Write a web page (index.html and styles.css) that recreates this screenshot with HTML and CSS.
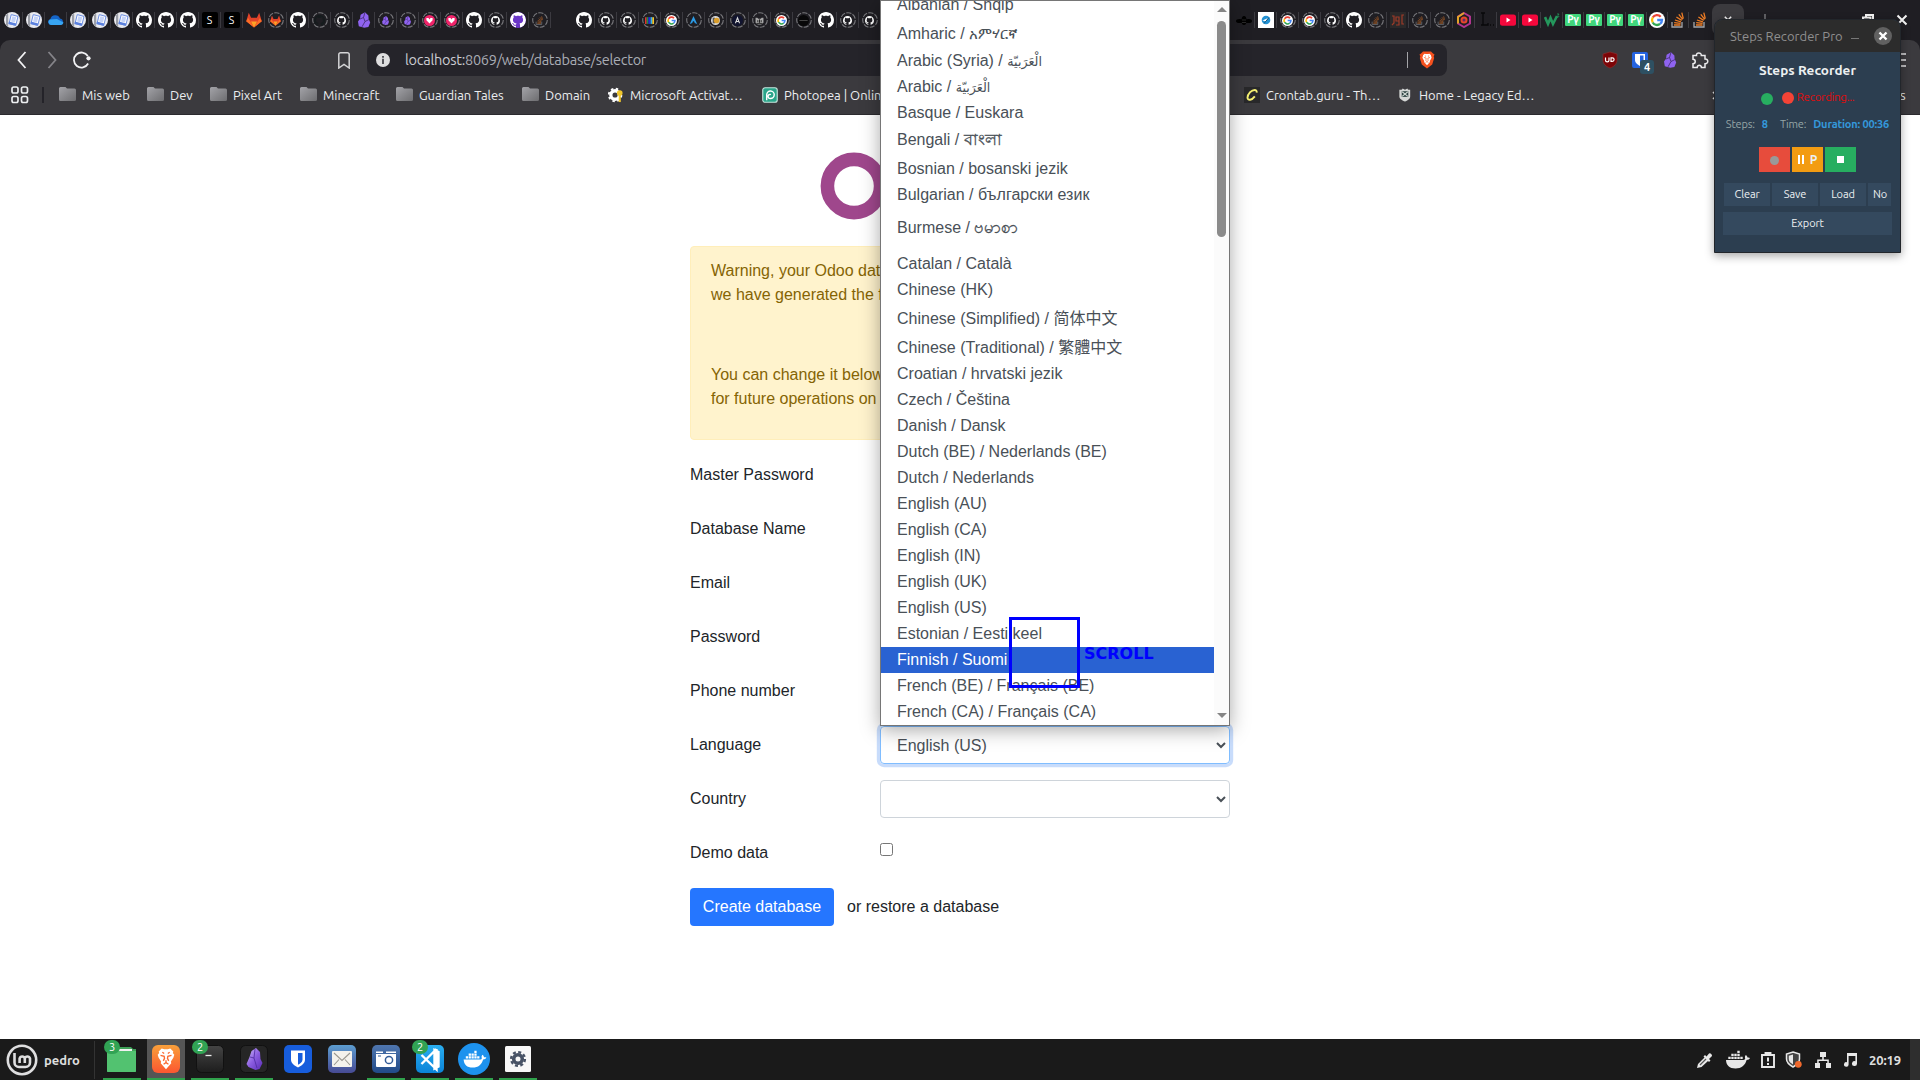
FILE: index.html
```html
<!DOCTYPE html>
<html lang="en">
<head>
<meta charset="utf-8">
<title>Odoo</title>
<link rel="stylesheet" href="styles.css">
</head>
<body>
<svg class="defs" aria-hidden="true">
  <defs>
    <linearGradient id="g-folder" x1="0" y1="0" x2="1" y2="1"><stop offset="0" stop-color="#a3a3a8"/><stop offset="1" stop-color="#6d6d70"/></linearGradient>
    <linearGradient id="g-brave" x1="0" y1="0" x2="0" y2="1"><stop offset="0" stop-color="#f9a03a"/><stop offset="1" stop-color="#fc5630"/></linearGradient>
    <linearGradient id="g-term" x1="0" y1="0" x2="0" y2="1"><stop offset="0" stop-color="#454545"/><stop offset="1" stop-color="#1d1d1d"/></linearGradient>
    <linearGradient id="g-mail" x1="0" y1="0" x2="0" y2="1"><stop offset="0" stop-color="#5c9dd0"/><stop offset="1" stop-color="#474a94"/></linearGradient>
    <linearGradient id="g-cam" x1="0" y1="0" x2="0" y2="1"><stop offset="0" stop-color="#4f76ae"/><stop offset="1" stop-color="#214a88"/></linearGradient>
    <linearGradient id="g-code" x1="0" y1="0" x2="0" y2="1"><stop offset="0" stop-color="#2aaef0"/><stop offset="1" stop-color="#0a84d8"/></linearGradient>
    <linearGradient id="g-obs" x1="0" y1="0" x2="1" y2="1"><stop offset="0" stop-color="#d0bcfb"/><stop offset=".5" stop-color="#8a5ce0"/><stop offset="1" stop-color="#5a2db5"/></linearGradient>
  </defs>
  <symbol id="ring" viewBox="0 0 16 16"><circle cx="8" cy="8" r="7.3" fill="none" stroke="#77777b" stroke-width="1.1" stroke-dasharray="5.2 1.3"/></symbol>
  <symbol id="gh" viewBox="0 0 16 16"><path d="M8 0C3.58 0 0 3.58 0 8c0 3.54 2.29 6.53 5.47 7.59.4.07.55-.17.55-.38 0-.19-.01-.82-.01-1.49-2.01.37-2.53-.49-2.69-.94-.09-.23-.48-.94-.82-1.13-.28-.15-.68-.52-.01-.53.63-.01 1.08.58 1.23.82.72 1.21 1.87.87 2.33.66.07-.52.28-.87.51-1.07-1.78-.2-3.64-.89-3.64-3.95 0-.87.31-1.59.82-2.15-.08-.2-.36-1.02.08-2.12 0 0 .67-.21 2.2.82.64-.18 1.32-.27 2-.27s1.36.09 2 .27c1.53-1.04 2.2-.82 2.2-.82.44 1.1.16 1.92.08 2.12.51.56.82 1.27.82 2.15 0 3.07-1.87 3.75-3.65 3.95.29.25.54.73.54 1.48 0 1.07-.01 1.93-.01 2.2 0 .21.15.46.55.38A8.01 8.01 0 0 0 16 8c0-4.42-3.58-8-8-8z"/></symbol>
  <symbol id="doc" viewBox="0 0 16 16"><circle cx="8" cy="8" r="8" fill="#e9eaef"/><path d="M2 3v10.500l2.200 1.200V1.500z" fill="#9c9fa8"/><g transform="rotate(14 9 8)"><rect x="6" y="3.200" width="7" height="9.300" rx=".6" fill="#fff" stroke="#6f90e2" stroke-width="1"/><path d="M7.500 4.500h4v5.500h-4z" fill="#c6d4f7"/><path d="M5.500 10.500h7.500V13H5.500z" fill="#5a80dd"/></g></symbol>
  <symbol id="cloud" viewBox="0 0 16 16"><path d="M3 13a3 3 0 0 1-.6-5.900A5 5 0 0 1 12 6.500a3.400 3.400 0 0 1 1 6.500z" fill="#1565c8"/><path d="M3 13a3 3 0 0 1-1-5.600L9 7l6.500 3.500A3 3 0 0 1 13 13z" fill="#38a5f2"/></symbol>
  <symbol id="gitlab" viewBox="0 0 16 16"><path d="M.2 9.200L2.800.700l2.300 5h5.800l2.300-5 2.600 8.500L8 15.500z" fill="#e2432a"/><path d="M.2 9.200l2-3.200L8 15.500zM15.800 9.200l-2-3.200L8 15.500z" fill="#fc6d26"/><path d="M5 9.500h6L8 15.500z" fill="#fca326"/></symbol>
  <symbol id="obs" viewBox="0 0 16 16"><path d="M9 .2l3.400 3.200.2 3.400 1.600 3.600-1.800 4.600-4.200.8-5.400-1.600L2 9.600l2-2.800.6-4z" fill="#8f63f0"/><path d="M9 .2L7.500 5.500 9 9.500 6 14.800M7.500 5.500L4 7M9 9.500l4-2" fill="none" stroke="#3d2b66" stroke-width=".8"/></symbol>
  <symbol id="vh" viewBox="0 0 16 16"><circle cx="8" cy="8" r="8" fill="#f0246a"/><path d="M8 12.500L3.500 7.500V4.500h3L8 6.500l1.500-2h3v3z" fill="#fff"/></symbol>
  <symbol id="so" viewBox="0 0 16 16"><path d="M2 10v5h10v-5" fill="none" stroke="#a5a7aa" stroke-width="1.300"/><path d="M4 13h6.500M4.200 10.600l6.400.7M4.900 8l6 1.800M6.400 5l5.300 3.400M8.800 2.300l3.900 5M11.800.600l1.500 6" stroke="#ef7d24" stroke-width="1.300"/></symbol>
  <symbol id="goo" viewBox="0 0 16 16"><circle cx="8" cy="8" r="8" fill="#fff"/><g fill="none" stroke-width="2.300"><path d="M11.700 4.700A5 5 0 0 0 3.700 5.500" stroke="#ea4335"/><path d="M3.700 5.500a5 5 0 0 0 0 5" stroke="#fbbc05"/><path d="M3.700 10.500a5 5 0 0 0 7.400 1.400" stroke="#34a853"/><path d="M11.100 11.900A5 5 0 0 0 13 8H8.200" stroke="#4285f4"/></g></symbol>
  <symbol id="rgb" viewBox="0 0 16 16"><path d="M0 2h3v12H0z" fill="#e4302b"/><path d="M3 2h3v12H3z" fill="#1f8b4a"/><path d="M6 2h4v12H6z" fill="#222bd6"/><path d="M10 2h3v12h-3z" fill="#3bb7e2"/><path d="M13 2h3v12h-3z" fill="#f3c62c"/></symbol>
  <symbol id="arch" viewBox="0 0 16 16"><path d="M8 0c2 4.500 4.500 10 7 15-2-1.500-3.500-2-5-2.500 0-4-4-4-4 0-1.500.5-3 1-5 2.500C3.500 10 6 4.500 8 0z" fill="#2b9be6"/></symbol>
  <symbol id="coin" viewBox="0 0 16 16"><circle cx="8" cy="8" r="8" fill="#d9d9d9"/><path d="M3 3h4v10H3z" fill="#555"/><circle cx="10" cy="8" r="5" fill="#d99d2b"/></symbol>
  <symbol id="dark" viewBox="0 0 16 16"><circle cx="8" cy="8" r="8" fill="#080809"/><path d="M2 8h12" stroke="#444" stroke-width="1.500"/></symbol>
  <symbol id="caret-a" viewBox="0 0 16 16"><circle cx="8" cy="8" r="8" fill="#11142e"/><path d="M5 12l3-8 3 8M6 9.500h4" fill="none" stroke="#ddd" stroke-width="1.500"/></symbol>
  <symbol id="bot" viewBox="0 0 16 16"><path d="M1 3h3l2 2h4l2-2h3v9l-4 3H5l-4-3z" fill="#a8a8a8"/><path d="M5 7.500v3M11 7.500v3M8 6v6M3 13h10" stroke="#111" stroke-width="1.600"/></symbol>
  <symbol id="yt" viewBox="0 0 16 16"><rect y="2.500" width="16" height="11.200" rx="2.500" fill="#f5083c"/><path d="M6.500 5.600v5l4-2.500z" fill="#fff"/></symbol>
  <symbol id="w3" viewBox="0 0 16 16"><path d="M1 5l3 7 2.500-6L9 12l4-8" fill="none" stroke="#24975c" stroke-width="2.600"/><path d="M13 2h2l-1 1.500 1 1-2 1" fill="none" stroke="#24975c" stroke-width=".8"/></symbol>
  <symbol id="bee" viewBox="0 0 16 16"><ellipse cx="3.500" cy="9" rx="3.500" ry="2"/><ellipse cx="12.500" cy="9" rx="3.500" ry="2"/><ellipse cx="8" cy="8.500" rx="2.500" ry="4.500"/><path d="M6 8h4M6 10.500h4" stroke="#333" stroke-width=".8"/></symbol>
  <symbol id="bird" viewBox="0 0 16 16"><path d="M0 0h16v16H0z" fill="#fff"/><circle cx="8" cy="8" r="4.300" fill="#2492d4"/><path d="M4.500 8.500l5.500-2.500-2 3.500z" fill="#fff"/><path d="M6 11.500l5-6" stroke="#17567c"/></symbol>
  <symbol id="jgl" viewBox="0 0 16 16"><path d="M0 0h16v16H0z" fill="#2b292a"/><path d="M2 4h2v7l-2 2M9 5H6v4h3zv8H6M14 3h-2v9h2" fill="none" stroke="#9e3b28" stroke-width="1.200"/></symbol>
  <symbol id="hex" viewBox="0 0 16 16"><path d="M8 1l6 3.500v7L8 15l-6-3.500v-7z" fill="none" stroke="#b0358f" stroke-width="2"/><path d="M2 11.500V5l6-4" fill="none" stroke="#e3a429" stroke-width="2"/><circle cx="8" cy="8" r="3.500" fill="#e8472a"/><circle cx="8" cy="8" r="1.500" fill="#602b6b"/></symbol>
  <symbol id="ell" viewBox="0 0 16 16"><path d="M3 1h4M5 1v12M3 13h7v-2M12 13h1M15 13h1" fill="none" stroke="#08080a" stroke-width="1.300"/></symbol>
  <symbol id="lion" viewBox="0 0 16 18"><path d="M4 .5h8l2 2 1.500 1-.8 2 .5 1.500-2 6.500L8 17.500 2.800 13.500.8 7l.5-1.500-.8-2L2 2.500z"/></symbol>
  <symbol id="face" viewBox="0 0 16 18"><path d="M4.500.5L6.500 1h3l2-.5 2.500 2.300-.4 1.200 1.200 1.500L14 8l-2 3 .3 1.500L8 17.300 3.700 12.500 4 11 2 8l-.8-2.500L2.400 4 2 2.800z"/><path d="M3.500 6l3 .8.3 1.700-1 2M12.500 6l-3 .8-.3 1.700 1 2M6 13.300l2-1.300 2 1.300M8 10v2M5 3.500l1.500 1M11 3.500l-1.500 1" fill="none" stroke="#fb6a32" stroke-width="1.100"/></symbol>
  <symbol id="folder" viewBox="0 0 17 15"><path d="M0 1.500A1.500 1.500 0 0 1 1.500 0h5L8 1.500h7.500A1.500 1.500 0 0 1 17 3v9.500a1.500 1.500 0 0 1-1.500 1.500h-14A1.500 1.500 0 0 1 0 12.500z" fill="url(#g-folder)"/></symbol>
  <symbol id="whale" viewBox="0 0 24 19"><path d="M0 10h17.500c1-.1 1.600-.6 1.700-1.400-.6-1.500-.1-2.600.6-3.500 1 .7 1.600 1.600 1.700 2.500 1-.2 1.900 0 2.500.4-.5 1.300-1.700 2-3.400 2C19 15.500 15.500 18.500 9.500 18.500 3.500 18.500.3 15.500 0 10z"/><path d="M2.300 6.700h2.400v2.400H2.300zM5.300 6.700h2.400v2.400H5.300zM8.300 6.700h2.400v2.400H8.300zM11.300 6.700h2.400v2.400h-2.400zM14.300 6.700h2.400v2.400h-2.400zM5.300 3.700h2.400v2.400H5.300zM8.300 3.700h2.400v2.400H8.300zM11.300 3.700h2.400v2.400h-2.400zM11.300.700h2.400v2.400h-2.400z"/></symbol>
</svg>

<div class="desktop">
  <header class="browser">
    <div class="tabs">
      <div class="tab"><svg><use href="#doc"/></svg></div>
      <div class="tab"><svg><use href="#doc"/></svg></div>
      <div class="tab"><svg><use href="#cloud"/></svg></div>
      <div class="tab"><svg><use href="#doc"/></svg></div>
      <div class="tab"><svg><use href="#doc"/></svg></div>
      <div class="tab"><svg><use href="#doc"/></svg></div>
      <div class="tab"><svg><use href="#gh"/></svg></div>
      <div class="tab"><svg><use href="#gh"/></svg></div>
      <div class="tab"><svg><use href="#gh"/></svg></div>
      <div class="tab"><span class="letter">S</span></div>
      <div class="tab"><span class="letter">S</span></div>
      <div class="tab"><svg><use href="#gitlab"/></svg></div>
      <div class="tab idle big"><svg><use href="#ring"/></svg><svg><use href="#gitlab"/></svg></div>
      <div class="tab"><svg><use href="#gh"/></svg></div>
      <div class="tab idle dim"><svg><use href="#ring"/></svg><svg><use href="#gh"/></svg></div>
      <div class="tab idle"><svg><use href="#ring"/></svg><svg><use href="#gh"/></svg></div>
      <div class="tab"><svg><use href="#obs"/></svg></div>
      <div class="tab idle"><svg><use href="#ring"/></svg><svg><use href="#obs"/></svg></div>
      <div class="tab idle"><svg><use href="#ring"/></svg><svg><use href="#obs"/></svg></div>
      <div class="tab idle big"><svg><use href="#ring"/></svg><svg><use href="#vh"/></svg></div>
      <div class="tab idle big"><svg><use href="#ring"/></svg><svg><use href="#vh"/></svg></div>
      <div class="tab"><svg><use href="#gh"/></svg></div>
      <div class="tab idle"><svg><use href="#ring"/></svg><svg><use href="#gh"/></svg></div>
      <div class="tab purple"><svg><use href="#gh"/></svg></div>
      <div class="tab idle faded"><svg><use href="#ring"/></svg><svg><use href="#so"/></svg></div>
      <div class="tab blank"></div>
      <div class="tab"><svg><use href="#gh"/></svg></div>
      <div class="tab idle"><svg><use href="#ring"/></svg><svg><use href="#gh"/></svg></div>
      <div class="tab idle"><svg><use href="#ring"/></svg><svg><use href="#gh"/></svg></div>
      <div class="tab idle"><svg><use href="#ring"/></svg><svg><use href="#rgb"/></svg></div>
      <div class="tab idle big"><svg><use href="#ring"/></svg><svg><use href="#goo"/></svg></div>
      <div class="tab idle"><svg><use href="#ring"/></svg><svg><use href="#arch"/></svg></div>
      <div class="tab idle"><svg><use href="#ring"/></svg><svg><use href="#coin"/></svg></div>
      <div class="tab idle big"><svg><use href="#ring"/></svg><svg><use href="#caret-a"/></svg></div>
      <div class="tab idle"><svg><use href="#ring"/></svg><svg><use href="#bot"/></svg></div>
      <div class="tab idle big"><svg><use href="#ring"/></svg><svg><use href="#goo"/></svg></div>
      <div class="tab idle big"><svg><use href="#ring"/></svg><svg><use href="#dark"/></svg></div>
      <div class="tab"><svg><use href="#gh"/></svg></div>
      <div class="tab idle"><svg><use href="#ring"/></svg><svg><use href="#gh"/></svg></div>
      <div class="tab idle"><svg><use href="#ring"/></svg><svg><use href="#gh"/></svg></div>
      <div class="tab-gap"></div>
      <div class="tab"><svg class="ink"><use href="#bee"/></svg></div>
      <div class="tab"><svg><use href="#bird"/></svg></div>
      <div class="tab idle big"><svg><use href="#ring"/></svg><svg><use href="#goo"/></svg></div>
      <div class="tab idle big"><svg><use href="#ring"/></svg><svg><use href="#goo"/></svg></div>
      <div class="tab idle"><svg><use href="#ring"/></svg><svg><use href="#gh"/></svg></div>
      <div class="tab"><svg><use href="#gh"/></svg></div>
      <div class="tab idle faded"><svg><use href="#ring"/></svg><svg><use href="#so"/></svg></div>
      <div class="tab"><svg><use href="#jgl"/></svg></div>
      <div class="tab idle faded"><svg><use href="#ring"/></svg><svg><use href="#so"/></svg></div>
      <div class="tab idle faded"><svg><use href="#ring"/></svg><svg><use href="#so"/></svg></div>
      <div class="tab"><svg><use href="#hex"/></svg></div>
      <div class="tab"><svg><use href="#ell"/></svg></div>
      <div class="tab"><svg><use href="#yt"/></svg></div>
      <div class="tab"><svg><use href="#yt"/></svg></div>
      <div class="tab"><svg><use href="#w3"/></svg></div>
      <div class="tab tight"><span class="letter py">Pγ</span></div>
      <div class="tab tight"><span class="letter py">Pγ</span></div>
      <div class="tab tight"><span class="letter py">Pγ</span></div>
      <div class="tab tight"><span class="letter py">Pγ</span></div>
      <div class="tab tight"><svg><use href="#goo"/></svg></div>
      <div class="tab tight"><svg><use href="#so"/></svg></div>
      <div class="tab tight last"><svg><use href="#so"/></svg></div>
      <div class="tab-active"><svg viewBox="0 0 10 10"><path d="M1 1l8 8M9 1L1 9"/></svg></div>
      <svg class="tab-new" viewBox="0 0 12 12"><path d="M6 0v12M0 6h12"/></svg>
      <div class="win-ctl">
        <svg viewBox="0 0 12 12"><path d="M1 3.500h7.500V11H1zM4 3V1h7v7.500H9"/></svg>
        <svg viewBox="0 0 12 12"><path d="M1.500 1.500l9 9M10.500 1.500l-9 9"/></svg>
      </div>
    </div>

    <div class="chrome">
      <div class="toolbar">
        <svg class="nav" viewBox="0 0 90 32"><path d="M15.500 8L8.500 16l7 8" stroke="#f2f2f4"/><path d="M38.500 8l7 8-7 8" stroke="#858489"/><path d="M77.800 12a7.500 7.500 0 1 0 .3 7.500" stroke="#f2f2f4"/><circle cx="78.500" cy="14.300" r="2.100" fill="#f2f2f4" stroke="none"/></svg>
        <svg class="mark" viewBox="0 0 12 17"><path d="M.8 2.500A1.700 1.700 0 0 1 2.500.8h7a1.700 1.700 0 0 1 1.700 1.700V16L6 12.500.8 16z"/></svg>
        <div class="address">
          <svg class="info" viewBox="0 0 14 14"><circle cx="7" cy="7" r="7" fill="#dededf"/><path d="M6 3h2v1.700H6zM6 5.800h2V11H6z" fill="#55555a"/></svg>
          <div class="url"><b>localhost:</b>8069/web/database/selector</div>
          <i class="bar"></i>
          <svg class="brave" viewBox="0 0 16 18"><use href="#lion" fill="#f4511e"/><use href="#face" x="2.500" y="2" width="11" height="13" fill="#fff"/></svg>
        </div>
        <div class="exts">
          <svg viewBox="0 0 18 18"><path d="M9 1l7 2v6c0 4-3 6.500-7 8-4-1.500-7-4-7-8V3z" fill="#7d0508" stroke="#93312f" stroke-width=".6"/><path d="M4.500 6.500v2.700a1.500 1.500 0 0 0 3.500 0V6.500M10 6.800h1.300a1.800 1.800 0 0 1 0 3.600H10z" fill="none" stroke="#fff" stroke-width="1.200"/></svg>
          <div class="ext-count"><svg viewBox="0 0 18 18"><rect x="1" y="1" width="16" height="16" rx="2" fill="#2563e0"/><path d="M4 3h10v6c0 3-2.500 4.500-5 6-2.500-1.500-5-3-5-6z" fill="#fff"/><path d="M9 4.500h3.500V9c0 2-1.500 3.200-3.500 4.300z" fill="#2563e0"/></svg><em>4</em></div>
          <svg viewBox="0 0 18 18"><use href="#obs" x="1" y="1" width="16" height="16"/></svg>
          <svg viewBox="0 0 18 18"><path d="M2 4.500h3.500C5 1 10.500 1 10.300 4.500H14V8c3.700-.4 3.700 5 0 4.700V16.500h-3.600c.1-2.900-4.300-2.900-4.200 0H2v-3.700c3-.2 3-4.300 0-4.500z" fill="none" stroke="#ececee" stroke-width="1.500"/></svg>
        </div>
        <svg class="menu" viewBox="0 0 16 14"><path d="M0 1h16M0 7h16M0 13h16"/></svg>
      </div>
      <div class="bookmarks">
        <svg class="apps" viewBox="0 0 18 18"><g><rect x="1" y="1" width="6" height="6" rx="1.700"/><rect x="10.500" y="1" width="6" height="6" rx="1.700"/><rect x="1" y="10.500" width="6" height="6" rx="1.700"/><rect x="10.500" y="10.500" width="6" height="6" rx="1.700"/></g></svg>
        <i class="divider"></i>
        <div class="bm w1"><svg><use href="#folder"/></svg><span>Mis web</span></div>
        <div class="bm w2"><svg><use href="#folder"/></svg><span>Dev</span></div>
        <div class="bm w3"><svg><use href="#folder"/></svg><span>Pixel Art</span></div>
        <div class="bm w4"><svg><use href="#folder"/></svg><span>Minecraft</span></div>
        <div class="bm w5"><svg><use href="#folder"/></svg><span>Guardian Tales</span></div>
        <div class="bm w6"><svg><use href="#folder"/></svg><span>Domain</span></div>
        <div class="bm w7"><svg viewBox="0 0 17 17"><circle cx="7.500" cy="8.500" r="4.500" fill="none" stroke="#fff" stroke-width="3.500"/><circle cx="7.500" cy="8.500" r="6.700" fill="none" stroke="#fff" stroke-width="2" stroke-dasharray="2.600 2.660"/><circle cx="12.500" cy="6.500" r="3" fill="#f0c62c"/><path d="M12.500 8v8" stroke="#f0c62c" stroke-width="2.200"/></svg><span>Microsoft Activat…</span></div>
        <div class="bm w8"><svg viewBox="0 0 17 17"><rect x=".8" y=".8" width="15.400" height="15.400" rx="2.500" fill="#2aa58a" stroke="#c5e5dd" stroke-width="1.200"/><path d="M5 14V8a4 4 0 1 1 4 4.200 2.200 2.200 0 1 1 .5-4.200" fill="none" stroke="#fff" stroke-width="1.500"/></svg><span>Photopea | Onlin</span></div>
        <div class="bm w9"><svg viewBox="0 0 17 17"><rect width="17" height="17" fill="#28282a"/><path d="M13.500 6c.5-4-4-3.500-7-.5-4 4.500-3.500 8.500 0 8 2-.3 3.500-1.500 5-3.500" fill="none" stroke="#f4ef72" stroke-width="2"/></svg><span>Crontab.guru - Th…</span></div>
        <div class="bm w10"><svg viewBox="0 0 17 17"><path d="M2.500 3c2 0 3-.3 3.500-1.500L8.500 3 11 1.500C11.500 2.700 12.500 3 14 3v7c0 3-3 4-5.500 5.500C6 14 2.500 13 2.500 10z" fill="#d5d7d6"/><path d="M5 4.500h7v6H5z" fill="#2d4242"/><path d="M5.500 5l6 5M11.500 5l-6 5" stroke="#cfd8d4" stroke-width="1.200"/></svg><span>Home - Legacy Ed…</span></div>
        <svg class="more" viewBox="0 0 6 9"><path d="M1 1l3.500 3.500L1 8"/></svg>
        <div class="bm"><span>s</span></div>
      </div>
    </div>
  </header>

  <main class="page">
    <div class="container">
      <div class="logo"><svg viewBox="0 0 212 68"><circle cx="34" cy="34" r="26.600" fill="none" stroke="#9f478c" stroke-width="13.600"/></svg></div>
      <div class="alert">
        <p>Warning, your Odoo dat<br>we have generated the f</p>
        <p>You can change it below<br>for future operations on</p>
      </div>
      <div class="row"><label>Master Password</label></div>
      <div class="row"><label>Database Name</label></div>
      <div class="row"><label>Email</label></div>
      <div class="row"><label>Password</label></div>
      <div class="row"><label>Phone number</label></div>
      <div class="row"><label>Language</label><div class="select focus"><span>English (US)</span><svg viewBox="0 0 10 7"><path d="M1 1l4 4 4-4"/></svg></div></div>
      <div class="row"><label>Country</label><div class="select"><span></span><svg viewBox="0 0 10 7"><path d="M1 1l4 4 4-4"/></svg></div></div>
      <div class="row"><label>Demo data</label><div class="check"></div></div>
      <div class="actions"><div class="btn">Create database</div><span>or restore a database</span></div>
    </div>
  </main>

  <footer class="panel">
    <svg class="mint" viewBox="0 0 32 32"><circle cx="16" cy="16" r="14.200" fill="none" stroke="#dededf" stroke-width="2.600"/><path d="M8.500 9v9.500a4.500 4.500 0 0 0 4.500 4.500h6.500a4.500 4.500 0 0 0 4.500-4.500v-4a2.700 2.700 0 0 0-5.200 0V19v-4.500a2.700 2.700 0 0 0-5.200 0V19" fill="none" stroke="#dededf" stroke-width="2.600"/></svg>
    <span class="user">pedro</span>
    <i class="psep"></i>
    <div class="task on"><svg viewBox="0 0 38 36"><path d="M4 6h24l2 2h3v22a1 1 0 0 1-1 1H5a1 1 0 0 1-1-1z" fill="#3e9f57"/><path d="M12 8h17v2H12z" fill="#f1f1f1"/><path d="M4 10h29v20a1 1 0 0 1-1 1H5a1 1 0 0 1-1-1z" fill="#52c270"/></svg><em>3</em></div>
    <div class="task on current"><svg viewBox="0 0 38 36"><rect x="5" y="4" width="28" height="28" rx="6" fill="url(#g-brave)"/><use href="#face" x="8" y="7" width="22" height="22" fill="#fff"/></svg></div>
    <div class="task on"><svg viewBox="0 0 38 36"><rect x="5.500" y="4.500" width="27" height="27" rx="5" fill="url(#g-term)" stroke="#111"/><path d="M14.500 14.500h6" stroke="#eee" stroke-width="1.300"/></svg><em>2</em></div>
    <div class="task on"><svg viewBox="0 0 38 36"><rect x="5.500" y="4.500" width="27" height="27" rx="5" fill="#262626" stroke="#111"/><path d="M21 7l4 4 .5 7 2 4-3 6-4 1-7-3-2-3 3-7 2-6z" fill="url(#g-obs)"/><path d="M20 8l-1 9-4-1M19 17l3 10" fill="none" stroke="#4c2aa0" stroke-width=".8"/></svg></div>
    <div class="task"><svg viewBox="0 0 38 36"><rect x="5" y="4" width="28" height="28" rx="5" fill="#175ddc"/><path d="M12 9.500h14v9c0 4-3.500 6.300-7 8-3.500-1.700-7-4-7-8z" fill="#fff"/><path d="M19 12h4.500v6.500c0 2.500-2 4-4.500 5.300z" fill="#175ddc"/></svg></div>
    <div class="task"><svg viewBox="0 0 38 36"><rect x="5" y="4" width="28" height="28" rx="5" fill="url(#g-mail)"/><rect x="9" y="10" width="20" height="16" rx="1" fill="#f4f2ec"/><path d="M11 12l8 7.500 8-7.500M11 24l5-5.500M27 24l-5-5.500" fill="none" stroke="#9a9890" stroke-width="1.100"/></svg></div>
    <div class="task on"><svg viewBox="0 0 38 36"><rect x="5" y="4" width="28" height="28" rx="5" fill="url(#g-cam)"/><path d="M9 13h20v12a1 1 0 0 1-1 1H10a1 1 0 0 1-1-1zM9 10.500h7V12H9zM19 10.500h10V12H19z" fill="#fff"/><circle cx="22" cy="19" r="3.600" fill="none" stroke="#335c98" stroke-width="1.500"/><path d="M11 15h3" stroke="#335c98"/></svg></div>
    <div class="task on"><svg viewBox="0 0 38 36"><rect x="5" y="4" width="28" height="28" rx="5" fill="url(#g-code)"/><path d="M25.500 8v20.500L10.500 14M25.500 8L10.500 23M23.500 9v18.500l4-2V11z" fill="none" stroke="#fff" stroke-width="2.400"/></svg><em>2</em></div>
    <div class="task on"><svg viewBox="0 0 38 36"><circle cx="19" cy="18" r="16" fill="#1d92ee"/><use href="#whale" x="8" y="9" width="24" height="18" fill="#fff"/></svg></div>
    <div class="task on"><svg viewBox="0 0 38 36"><rect x="6" y="5" width="26" height="26" rx="1.500" fill="#f8f8f8"/><circle cx="19" cy="18" r="4.300" fill="none" stroke="#475265" stroke-width="3.600"/><circle cx="19" cy="18" r="6.900" fill="none" stroke="#475265" stroke-width="2.400" stroke-dasharray="3 2.420"/></svg></div>
    <div class="tray">
      <svg class="t1" viewBox="0 0 16 16"><path d="M0 16l1-4 6.500-6.500-1-1L8 3l1.500 1.500L12 1.500A2.300 2.300 0 0 1 15 4l-3 3 1.500 1.500L12 10l-1-1-6.500 6z"/><path d="M3 13l6-6" stroke="#555" stroke-width="1.200"/></svg>
      <svg class="t2" viewBox="0 0 24 19"><use href="#whale"/></svg>
      <svg class="t3" viewBox="0 0 14 16"><path d="M1 3h12v12H1zM4.500 3V1h5v2" fill="none" stroke="#e8e8e8" stroke-width="1.900"/><path d="M6 5.500h2v4H6zM6 11h2v2H6z"/></svg>
      <svg class="t4" viewBox="0 0 17 17"><path d="M8 1l6.500 2v5c0 4-3 6-6.500 8C4.500 14 1.500 12 1.500 8V3z" fill="#444" stroke="#e8e8e8" stroke-width="1.500"/><path d="M8 3.500v10C5.500 12 3.800 10.500 3.800 8V4.700z"/><circle cx="13.300" cy="13.300" r="3.400" fill="#f0692d"/></svg>
      <svg class="t5" viewBox="0 0 16 16"><path d="M5 0h6v5H5zM0 11h5v5H0zM11 11h5v5h-5zM7.200 5h1.600v2.500h5V11h-1.500V9H3.700v2H2.200V7.500h5z"/></svg>
      <svg class="t6" viewBox="0 0 13 15"><path d="M3 1h10v10.500a2.500 2.500 0 1 1-1.600-2.300V4H4.600v8.500a2.300 2.300 0 1 1-1.600-2.200z"/></svg>
      <span class="clock">20:19</span>
    </div>
    <i class="peek"></i>
  </footer>

  <div class="dropdown">
    <ul class="options">
      <li>Albanian / Shqip</li>
      <li class="amh">Amharic / <span lang="am">አምሃርኛ</span></li>
      <li>Arabic (Syria) / <span lang="ar">الْعَرَبيّة</span></li>
      <li>Arabic / <span lang="ar">الْعَرَبيّة</span></li>
      <li>Basque / Euskara</li>
      <li class="ben">Bengali / <span lang="bn">বাংলা</span></li>
      <li>Bosnian / bosanski jezik</li>
      <li>Bulgarian / български език</li>
      <li class="bur">Burmese / <span lang="my">ဗမာစာ</span></li>
      <li>Catalan / Català</li>
      <li>Chinese (HK)</li>
      <li class="cjk">Chinese (Simplified) / <span lang="zh-CN">简体中文</span></li>
      <li class="cjk">Chinese (Traditional) / <span lang="zh-TW">繁體中文</span></li>
      <li>Croatian / hrvatski jezik</li>
      <li>Czech / Čeština</li>
      <li>Danish / Dansk</li>
      <li>Dutch (BE) / Nederlands (BE)</li>
      <li>Dutch / Nederlands</li>
      <li>English (AU)</li>
      <li>English (CA)</li>
      <li>English (IN)</li>
      <li>English (UK)</li>
      <li>English (US)</li>
      <li>Estonian / Eesti keel</li>
      <li class="hover">Finnish / Suomi</li>
      <li>French (BE) / Français (BE)</li>
      <li>French (CA) / Français (CA)</li>
    </ul>
    <div class="scrollbar"><i class="up"></i><i class="thumb"></i><i class="down"></i></div>
  </div>

  <div class="marker"></div>
  <div class="marker-label">SCROLL</div>

  <section class="recorder">
    <div class="titlebar"><span>Steps Recorder Pro</span><i></i><svg viewBox="0 0 18 18"><circle cx="9" cy="9" r="9" fill="#616161"/><path d="M5.500 5.500l7 7M12.500 5.500l-7 7" stroke="#fff" stroke-width="2.400"/></svg></div>
    <h1>Steps Recorder</h1>
    <div class="status"><i class="dot green"></i><i class="dot red"></i><span>Recording...</span></div>
    <div class="stats"><span>Steps:</span><b>8</b><span>Time:</span><b>Duration: 00:36</b></div>
    <div class="controls">
      <div class="rec"><i></i></div>
      <div class="pause"><i></i><i></i><span>P</span></div>
      <div class="stop"><i></i></div>
    </div>
    <div class="tools"><div>Clear</div><div>Save</div><div>Load</div><div class="cut">No</div></div>
    <div class="export">Export</div>
  </section>
</div>
</body>
</html>
```
FILE: styles.css
```css
* { box-sizing: border-box; }
body { margin: 0; background: #fff; font-family: "Liberation Sans", Arial, sans-serif; font-size: 16px; }
i, em, b { font-style: normal; }
.defs { position: absolute; width: 0; height: 0; }
.desktop { position: relative; width: 1920px; height: 1080px; overflow: hidden; display: flex; flex-direction: column; }

/* browser frame */
.browser { height: 115px; background: #1f1e23; font-family: Ubuntu, "Noto Sans", sans-serif; flex: none; }
.tabs { height: 40px; display: flex; align-items: center; padding-left: 1px; }
.tab { width: 22px; height: 16px; flex: none; display: grid; place-items: center; border-right: 1px solid #3b3a40; fill: #fff; }
.tab svg { width: 16px; height: 16px; grid-area: 1 / 1; }
.tab.idle svg + svg { width: 9px; height: 9px; }
.tab.idle.big svg + svg { width: 11px; height: 11px; }
.tab.dim { fill: #151b1d; }
.tab.dim svg + svg { width: 11px; height: 11px; }
.tab.faded svg + svg { opacity: .65; }
.tab .ink { fill: #000; }
.tab.purple svg { background: #6a35c8; border-radius: 50%; }
.tab.blank { border-right-color: transparent; }
.tab.tight { width: 21px; }
.tab.last { border: 0; }
.letter { width: 16px; height: 16px; border-radius: 2px; background: #000; color: #fff; font-size: 10.500px; line-height: 16px; text-align: center; }
.letter.py { height: 12px; line-height: 11px; font-size: 10px; font-weight: 600; border-radius: 1px; background: #40d67c; }
.tab-gap { width: 352px; flex: none; }
.tab-active { width: 32px; height: 32px; margin-left: 2px; background: #3b3a3e; border-radius: 8px; display: grid; place-items: center; }
.tab-active svg { width: 8px; height: 8px; fill: none; stroke: #f2f2f4; stroke-width: 1.900; }
.tab-new { width: 12px; height: 12px; margin-left: 15px; stroke: #77777b; stroke-width: 1.500; }
.win-ctl { margin-left: auto; padding-right: 12px; display: flex; gap: 22px; fill: none; stroke: #f4f4f4; stroke-width: 2; }
.win-ctl svg { width: 12px; height: 12px; }
.chrome { height: 75px; background: #3b3a3e; border-radius: 10px 10px 0 0; border-bottom: 1px solid #2b2a2e; }
.toolbar { height: 40px; display: flex; align-items: center; padding-left: 10px; }
.nav { width: 90px; height: 32px; fill: none; stroke-width: 1.800; }
.mark { width: 12px; height: 17px; margin-left: 238px; fill: none; stroke: #d4d4d6; stroke-width: 1.500; }
.address { width: 1080px; height: 32px; margin-left: 17px; border-radius: 8px; background: #25242a; display: flex; align-items: center; padding: 0 12px 0 9px; color: #aaadb5; }
.info { width: 14px; height: 14px; margin-right: 15px; }
.url { font-size: 14.500px; white-space: nowrap; letter-spacing: -.26px; margin-top: -2px; }
.url b { font-weight: 400; color: #cbccd2; }
.bar { width: 1px; height: 16px; background: #a4a4a8; margin-left: auto; margin-right: 11px; }
.brave { width: 16px; height: 18px; }
.exts { display: flex; gap: 12px; margin-left: 154px; }
.exts svg { width: 18px; height: 18px; display: block; }
.ext-count { position: relative; }
.ext-count em { position: absolute; left: 9px; top: 9px; width: 14px; height: 14px; border-radius: 3px; background: #2e5062; color: #fff; font-size: 11px; line-height: 14px; font-weight: 600; text-align: center; }
.menu { width: 16px; height: 14px; margin-left: 181px; stroke: #e4e4e6; stroke-width: 1.600; }
.bookmarks { height: 30px; display: flex; align-items: center; padding-left: 11px; color: #eceef0; font-size: 13px; white-space: nowrap; overflow: hidden; }
.apps { width: 18px; height: 18px; fill: none; stroke: #eceef0; stroke-width: 1.700; flex: none; }
.divider { width: 2px; height: 16px; background: #242329; margin: 0 15px 0 13px; flex: none; }
.bm { display: flex; align-items: center; gap: 6px; flex: none; letter-spacing: -.03px; }
.bm svg { width: 17px; height: 15px; flex: none; margin-top: -1px; }
.w1 { width: 88px; } .w2 { width: 63px; } .w3 { width: 90px; } .w4 { width: 96px; }
.w5 { width: 126px; } .w6 { width: 86px; } .w7 { width: 154px; } .w8 { width: 482px; }
.w9 { width: 153px; } .w10 { width: 315px; }
.w7 svg, .w8 svg, .w9 svg, .w10 svg { width: 16px; height: 16px; margin-top: 0; }
.more { width: 6px; height: 9px; fill: none; stroke: #eceef0; stroke-width: 1.500; flex: none; margin-right: 182px; }

/* page */
.page { flex: 1; background: #fff; padding-top: 37px; color: #212529; line-height: 24px; }
.container { width: 540px; margin: 0 auto; }
.logo { height: 94px; padding-left: 130px; }
.logo svg { width: 212px; height: 68px; display: block; }
.alert { height: 194px; border: 1px solid #ffeeba; border-radius: 4px; background: #fff3cd; color: #856404; padding: 12px 20px; margin-bottom: 16px; white-space: nowrap; overflow: hidden; }
.alert p { margin: 0 0 56px; }
.row { height: 38px; margin-bottom: 16px; display: flex; align-items: center; }
.row label { width: 190px; }
.select { width: 350px; height: 38px; border: 1px solid #ced4da; border-radius: 4px; padding: 2px 3px 0 16px; color: #495057; display: flex; align-items: center; justify-content: space-between; }
.select.focus { border-color: #80bdff; box-shadow: 0 0 0 3.200px #c8dcfb; }
.select svg { width: 10px; height: 7px; margin-top: -2px; fill: none; stroke: #495057; stroke-width: 2; }
.check { width: 13px; height: 13px; border: 1px solid #767676; border-radius: 2.500px; margin-top: -7px; }
.actions { display: flex; align-items: center; gap: 13px; }
.btn { width: 144px; height: 38px; line-height: 38px; border-radius: 4px; background: #2576ff; color: #fff; text-align: center; }

/* select popup */
.dropdown { position: absolute; left: 880px; top: 0; width: 350px; height: 726px; border: 1px solid #767676; background: #fff; display: flex; overflow: hidden; box-shadow: 0 4px 18px rgba(0, 0, 0, .34); }
.options { flex: 1; margin: -9px 0 0; padding: 0; list-style: none; color: #495057; }
.options li { height: 26px; line-height: 25px; padding-left: 16px; white-space: nowrap; overflow: hidden; font-family: "Liberation Sans", "Noto Sans", "Noto Sans CJK SC", sans-serif; }
.options .amh { height: 30px; padding-top: 3px; }
.options .ben { height: 30px; padding-top: 1px; }
.options .bur { height: 43px; padding-top: 7px; }
.options .cjk { height: 29px; padding-top: 2px; }
.options .hover { background: #2962d2; color: #fff; }
[lang="am"] { font-size: 14.500px; }
[lang="bn"], [lang="my"] { -webkit-text-stroke: .3px #495057; }
[lang="my"] { font-size: 16.500px; }
[lang="ar"] { font-size: 12.700px; font-family: "DejaVu Sans", sans-serif; }
[lang="zh-CN"] { font-family: "Noto Sans CJK SC", sans-serif; }
[lang="zh-TW"] { font-family: "Noto Sans CJK TC", sans-serif; }
.scrollbar { width: 15px; background: #fbfbfb; display: flex; flex-direction: column; align-items: center; padding: 6px 0 7px; }
.up { border: 5px solid transparent; border-top: 0; border-bottom: 5px solid #858585; }
.thumb { width: 9px; height: 216px; border-radius: 5px; background: #8b8b8b; margin-top: 9px; }
.down { border: 5px solid transparent; border-bottom: 0; border-top: 5px solid #858585; margin-top: auto; }

/* click annotation */
.marker { position: absolute; left: 1009px; top: 617px; width: 71px; height: 71px; border: 3px solid #00f; }
.marker-label { position: absolute; left: 1084px; top: 644px; font: bold 16px/20px "DejaVu Sans", sans-serif; color: #00f; }

/* recorder window */
.recorder { position: absolute; left: 1714px; top: 19px; width: 187px; height: 234px; background: #2c3e50; border: 1px solid #22262b; border-radius: 8px 8px 0 0; overflow: hidden; box-shadow: 0 3px 10px rgba(0, 0, 0, .35); font-family: Ubuntu, "Noto Sans", sans-serif; font-size: 11px; color: #ecf0f1; display: flex; flex-direction: column; align-items: center; }
.titlebar { width: 100%; height: 32px; flex: none; background: #2c2c2c; color: #8f8f8f; font-size: 13px; display: flex; align-items: center; padding: 0 8px 0 15px; white-space: nowrap; }
.titlebar span { width: 114px; letter-spacing: .04px; }
.titlebar i { width: 8px; height: 1px; margin: 4px 0 0 7px; background: #777; }
.titlebar svg { width: 18px; height: 18px; margin-left: auto; }
.recorder h1 { margin: 8px 0 0; font-size: 13.500px; line-height: 20px; letter-spacing: .05px; font-weight: 600; }
.status { display: flex; align-items: center; height: 20px; margin-top: 8px; color: #e00b0b; font-size: 11.500px; letter-spacing: -.3px; }
.status span { margin-top: -3px; }
.dot { width: 12px; height: 12px; border-radius: 50%; }
.green { background: #27ae60; margin-top: 1px; margin-right: 9px; }
.red { background: #f44336; margin-right: 3px; margin-top: -1px; }
.stats { display: flex; align-items: center; height: 20px; margin-top: 6px; color: #95a5a6; white-space: nowrap; letter-spacing: -.18px; }
.stats b { color: #3498db; font-weight: 600; margin: 0 12px 0 7px; }
.stats b:last-child { margin-right: 0; }
.controls { display: flex; gap: 2px; margin-top: 13px; }
.controls div { width: 31px; height: 25px; display: flex; align-items: center; justify-content: center; font-weight: 600; font-size: 12px; }
.rec { background: #e74c3c; } .pause { background: #f39c12; } .stop { background: #27ae60; }
.rec i { width: 9px; height: 9px; border-radius: 50%; background: #999; margin-top: 2px; }
.pause i { width: 2px; height: 9px; background: #fff; margin-right: 2px; }
.pause span { margin-left: 4px; }
.stop i { width: 7px; height: 7px; background: #fff; }
.tools { display: flex; gap: 2px; margin-top: 11px; }
.tools div, .export { width: 46px; height: 23px; line-height: 22px; background: #34495e; text-align: center; overflow: hidden; letter-spacing: -.1px; }
.tools .cut { width: 23px; padding-left: 5px; text-align: left; }
.export { width: 169px; margin-top: 6px; }

/* desktop panel */
.panel { height: 41px; flex: none; background: #1a1a1a; display: flex; align-items: center; font-family: Ubuntu, "Noto Sans", sans-serif; color: #dedede; padding-left: 6px; }
.mint { width: 32px; height: 32px; flex: none; }
.user { width: 50px; padding-left: 6px; font-size: 13px; font-weight: 600; letter-spacing: -.05px; }
.psep { width: 1px; height: 38px; background: #333; margin: 0 8px 0 6px; }
.task { position: relative; width: 38px; height: 41px; margin-right: 6px; flex: none; border-bottom: 2px solid transparent; padding-top: 2px; }
.task svg { width: 38px; height: 36px; display: block; }
.task.on { border-color: #30a24c; }
.task.current { background: #555; }
.task em { position: absolute; left: 1px; top: 1px; width: 16px; height: 14px; border-radius: 7px; background: #31a354; color: #fff; font-size: 11px; line-height: 14px; text-align: center; }
.tray { margin-left: auto; display: flex; align-items: center; fill: #e8e8e8; }
.t1 { width: 16px; height: 16px; margin-right: 13px; }
.t2 { width: 24px; height: 19px; margin-right: 11px; }
.t3 { width: 14px; height: 16px; margin-right: 10px; }
.t4 { width: 17px; height: 17px; margin-right: 13px; }
.t5 { width: 16px; height: 16px; margin-right: 13px; }
.t6 { width: 13px; height: 15px; margin-right: 12px; }
.clock { width: 41px; font-size: 13px; font-weight: 600; letter-spacing: -.1px; }
.peek { width: 10px; height: 41px; background: #2e2e2e; }
```
